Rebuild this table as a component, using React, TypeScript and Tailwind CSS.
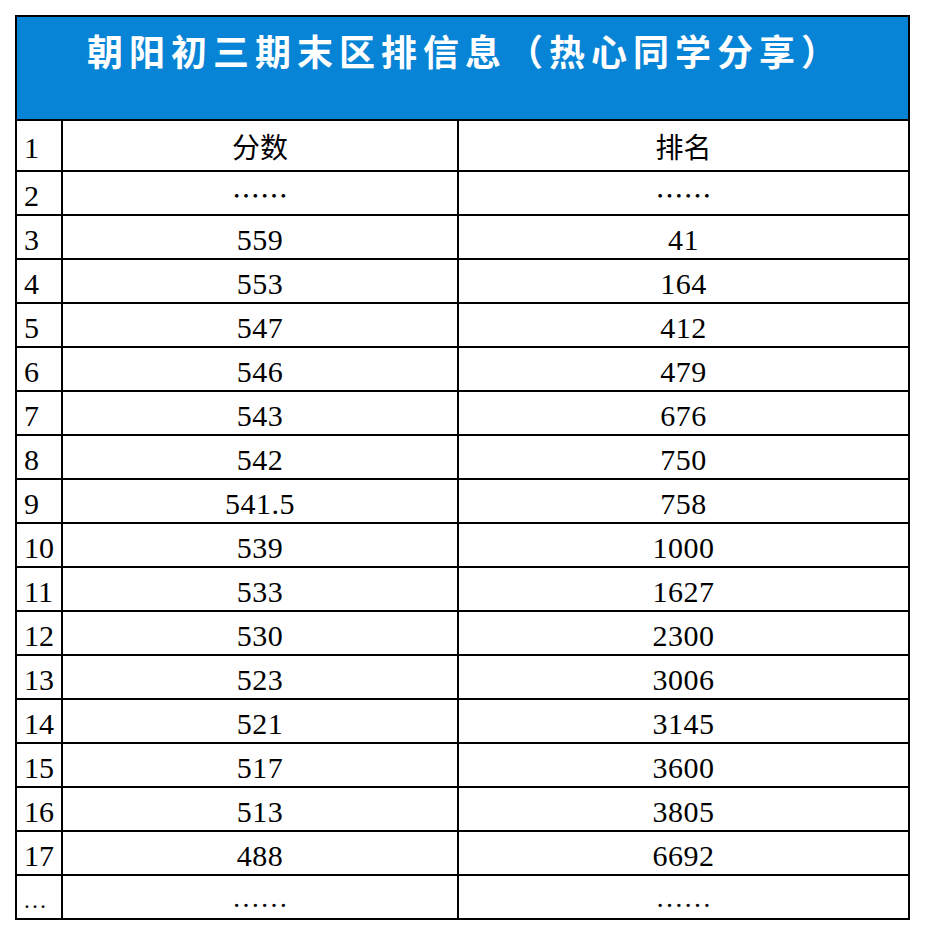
const rows: [string, string, string][] = [
  ['3', '559', '41'],
  ['4', '553', '164'],
  ['5', '547', '412'],
  ['6', '546', '479'],
  ['7', '543', '676'],
  ['8', '542', '750'],
  ['9', '541.5', '758'],
  ['10', '539', '1000'],
  ['11', '533', '1627'],
  ['12', '530', '2300'],
  ['13', '523', '3006'],
  ['14', '521', '3145'],
  ['15', '517', '3600'],
  ['16', '513', '3805'],
  ['17', '488', '6692'],
]

const serif = "font-['Liberation_Serif','Noto_Sans_CJK_SC',serif]"
const cjk = "font-['Noto_Sans_CJK_SC',sans-serif]"

function Row({ no, score, rank }: { no: string; score: string; rank: string }) {
  return (
    <div className="flex h-[44px] border-b-2 border-black">
      <div className={`w-[46px] shrink-0 border-r-2 border-black pl-[7px] pt-[5px] flex items-center text-[30px] leading-none ${serif}`}>
        {no}
      </div>
      <div className={`w-[396px] shrink-0 border-r-2 border-black pt-[5px] flex items-center justify-center text-[30px] leading-none tracking-[0.5px] ${serif}`}>
        {score}
      </div>
      <div className={`flex-1 pt-[5px] flex items-center justify-center text-[30px] leading-none tracking-[0.5px] ${serif}`}>
        {rank}
      </div>
    </div>
  )
}

export default function App() {
  return (
    <div className="w-[926px] h-[936px] bg-white pt-[15px] pl-[15px] text-black">
      <div className="w-[895px] border-2 border-black">
        {/* title bar */}
        <div className="h-[104px] bg-[#0784d6] border-b-2 border-black pt-[15px] pl-[70px]">
          <h1 className={`text-white font-bold text-[36px] leading-none tracking-[6px] ${cjk}`}>
            朝阳初三期末区排信息（热心同学分享）
          </h1>
        </div>

        {/* column heads */}
        <div className="flex h-[51px] border-b-2 border-black">
          <div className={`w-[46px] shrink-0 border-r-2 border-black pl-[7px] pt-[5px] flex items-center text-[30px] leading-none ${serif}`}>
            1
          </div>
          <div className={`w-[396px] shrink-0 border-r-2 border-black flex items-center justify-center text-[28px] leading-none ${cjk}`}>
            分数
          </div>
          <div className={`flex-1 flex items-center justify-center text-[28px] leading-none ${cjk}`}>排名</div>
        </div>

        {/* row 2 */}
        <div className="flex h-[44px] border-b-2 border-black">
          <div className={`w-[46px] shrink-0 border-r-2 border-black pl-[7px] pt-[5px] flex items-center text-[30px] leading-none ${serif}`}>
            2
          </div>
          <div className={`w-[396px] shrink-0 border-r-2 border-black pt-[3px] flex items-center justify-center text-[28px] leading-none ${cjk}`}>
            ……
          </div>
          <div className={`flex-1 pt-[3px] flex items-center justify-center text-[28px] leading-none ${cjk}`}>……</div>
        </div>

        {rows.map(([no, score, rank]) => (
          <Row key={no} no={no} score={score} rank={rank} />
        ))}

        {/* trailing row */}
        <div className="flex h-[42px]">
          <div className={`w-[46px] shrink-0 border-r-2 border-black pl-[6px] flex items-end pb-[6px] text-[24px] leading-none ${serif}`}>
            …
          </div>
          <div className="w-[396px] shrink-0 border-r-2 border-black flex items-end justify-center pb-[6px] text-[28px] leading-none font-['Liberation_Serif',serif]">
            ……
          </div>
          <div className="flex-1 flex items-end justify-center pb-[6px] text-[28px] leading-none font-['Liberation_Serif',serif]">
            ……
          </div>
        </div>
      </div>
    </div>
  )
}
